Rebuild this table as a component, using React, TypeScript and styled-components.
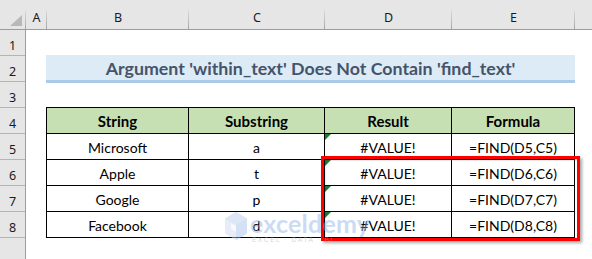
import React from "react";
import styled, { createGlobalStyle } from "styled-components";

const Global = createGlobalStyle`
  html, body { margin: 0; padding: 0; background: #fff; overflow: hidden; }
`;

const Sheet = styled.div`
  position: relative;
  width: 592px;
  height: 259px;
  overflow: hidden;
  background: #fff;
  font-family: Lato, "Liberation Sans", sans-serif;
`;

const ColumnBar = styled.div`
  display: grid;
  grid-template-columns: 26px 21px 142px 136px 127px 123px 1fr;
  height: 30px;
  box-sizing: border-box;
  background: #e6e6e6;
  border-bottom: 1px solid #9c9c9c;
`;

const ColHead = styled.div<{ $sep?: boolean }>`
  position: relative;
  display: flex;
  align-items: flex-end;
  justify-content: center;
  padding-bottom: 5px;
  font-family: "Noto Sans", "Liberation Sans", sans-serif;
  font-size: 12.5px;
  line-height: 1;
  color: #1a1a1a;
  &::after {
    content: "";
    display: ${(p) => (p.$sep === false ? "none" : "block")};
    position: absolute;
    right: 0;
    top: 10px;
    bottom: 0;
    width: 1px;
    background: linear-gradient(#dcdcdc, #a6a6a6);
  }
`;

const CornerTriangle = styled.div`
  position: absolute;
  left: 10px;
  top: 15px;
  width: 12px;
  height: 11px;
  background: #b8b8b8;
  clip-path: polygon(100% 0, 100% 100%, 0 100%);
`;

const Body = styled.div`
  display: flex;
`;

const RowHeaders = styled.div`
  width: 26px;
  box-sizing: border-box;
  background: #e6e6e6;
  border-right: 1px solid #9c9c9c;
  display: flex;
  flex-direction: column;
  height: 229px;
`;

const RowNum = styled.div`
  height: 26px;
  box-sizing: border-box;
  border-bottom: 1px solid #b4b4b4;
  display: flex;
  align-items: flex-end;
  justify-content: center;
  padding-bottom: 3px;
  font-family: "Noto Sans", "Liberation Sans", sans-serif;
  font-size: 12.5px;
  line-height: 1;
  color: #1a1a1a;
`;

const Main = styled.div`
  padding-left: 20px;
  display: flex;
  flex-direction: column;
`;

const Spacer = styled.div<{ $h: number }>`
  height: ${(p) => p.$h}px;
`;

const Title = styled.div`
  width: 529px;
  height: 28px;
  box-sizing: border-box;
  background: #ddebf7;
  border-bottom: 3px solid #a9cbe9;
  display: flex;
  align-items: center;
  justify-content: center;
  padding-top: 1px;
  font-weight: 700;
  font-size: 17.8px;
  color: #44546a;
`;

const TableWrap = styled.div`
  position: relative;
  width: 529px;
`;

const Table = styled.div`
  display: grid;
  grid-template-columns: 141px 135px 126px 122px;
  grid-auto-rows: 25px;
  gap: 1px;
  padding: 1px;
  background: #000;
`;

const Cell = styled.div<{ $head?: boolean; $flag?: boolean }>`
  position: relative;
  background: ${(p) => (p.$head ? "#c6e0b4" : "#fff")};
  display: flex;
  align-items: flex-end;
  justify-content: center;
  padding-bottom: 4px;
  box-sizing: border-box;
  font-size: ${(p) => (p.$head ? "15px" : "14px")};
  line-height: 1;
  font-weight: ${(p) => (p.$head ? 700 : 400)};
  color: #000;
  &::before {
    content: "";
    display: ${(p) => (p.$flag ? "block" : "none")};
    position: absolute;
    left: 0;
    top: 0;
    width: 6px;
    height: 6px;
    background: #1f7a33;
    clip-path: polygon(0 0, 100% 0, 0 100%);
  }
`;

const Highlight = styled.div`
  position: absolute;
  left: 275px;
  top: 49px;
  width: 259px;
  height: 85px;
  box-sizing: border-box;
  border: 3px solid #ff0000;
  box-shadow: 2px 2px 3px rgba(0, 0, 0, 0.35), inset 1px 1px 2px rgba(0, 0, 0, 0.25);
  pointer-events: none;
`;

const Watermark = styled.div`
  position: absolute;
  left: 224px;
  top: 211px;
  display: flex;
  align-items: flex-start;
  gap: 2px;
  opacity: 0.45;
  pointer-events: none;
`;

const WmText = styled.div`
  display: flex;
  flex-direction: column;
  align-items: flex-start;
`;

const WmName = styled.span`
  font-family: Lato, "Liberation Sans", sans-serif;
  font-weight: 700;
  font-size: 25px;
  line-height: 25px;
  color: #8fb1e8;
  letter-spacing: 0.2px;
`;

const WmSub = styled.span`
  font-family: "Liberation Sans", sans-serif;
  font-size: 6.5px;
  line-height: 7px;
  letter-spacing: 1.6px;
  color: #9aa8bd;
  padding-left: 2px;
`;

const cols = ["A", "B", "C", "D", "E"];
const rows = [
  ["Microsoft", "a", "#VALUE!", "=FIND(D5,C5)"],
  ["Apple", "t", "#VALUE!", "=FIND(D6,C6)"],
  ["Google", "p", "#VALUE!", "=FIND(D7,C7)"],
  ["Facebook", "d", "#VALUE!", "=FIND(D8,C8)"],
];

export default function App() {
  return (
    <>
      <Global />
      <Sheet>
        <ColumnBar>
          <ColHead>
            <CornerTriangle />
          </ColHead>
          {cols.map((c) => (
            <ColHead key={c}>{c}</ColHead>
          ))}
          <ColHead $sep={false} />
        </ColumnBar>
        <Body>
          <RowHeaders>
            {[1, 2, 3, 4, 5, 6, 7, 8].map((n) => (
              <RowNum key={n}>{n}</RowNum>
            ))}
          </RowHeaders>
          <Main>
            <Spacer $h={25} />
            <Title>Argument 'within_text' Does Not Contain 'find_text'</Title>
            <Spacer $h={24} />
            <TableWrap>
              <Table>
                {["String", "Substring", "Result", "Formula"].map((h) => (
                  <Cell key={h} $head>
                    {h}
                  </Cell>
                ))}
                {rows.map((r) =>
                  r.map((v, i) => (
                    <Cell key={r[0] + i} $flag={i === 2}>
                      {v}
                    </Cell>
                  ))
                )}
              </Table>
              <Highlight />
            </TableWrap>
          </Main>
        </Body>
        <Watermark>
          <svg width="24" height="30" viewBox="0 0 24 30">
            <polygon points="12,1 23,7.5 23,22.5 12,29 1,22.5 1,7.5" fill="#c9d8f2" />
            <polygon points="12,1 23,7.5 12,14 1,7.5" fill="#b3c9ee" />
            <polygon points="12,14 23,7.5 23,22.5 12,29" fill="#9fbbea" />
            <polygon points="7,12 12,15 12,21 7,18" fill="#ffffff" opacity="0.7" />
          </svg>
          <WmText>
            <WmName>exceldemy</WmName>
            <WmSub>EXCEL · DATA · BI</WmSub>
          </WmText>
        </Watermark>
      </Sheet>
    </>
  );
}
